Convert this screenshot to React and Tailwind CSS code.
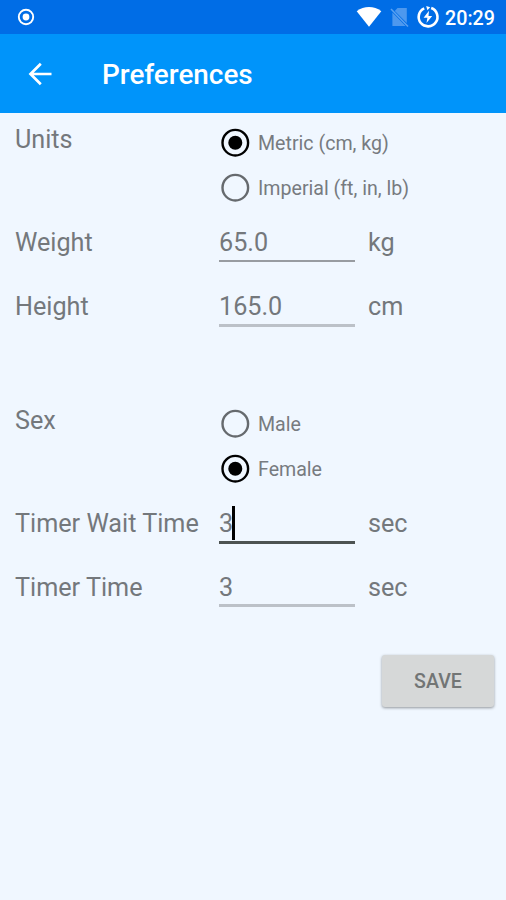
function Radio({ label, checked }) {
  return (
    <div className="flex h-[45px] items-center">
      <svg className="ml-px h-[30px] w-[30px] shrink-0" viewBox="0 0 30 30" fill="none">
        <circle cx="15.3" cy="14.7" r="12.8" stroke={checked ? '#000' : '#666a6e'} strokeWidth="2.4" />
        {checked && <circle cx="15.3" cy="14.7" r="7" fill="#000" />}
      </svg>
      <span className="ml-[8px] mt-[2px] text-[19.6px] leading-6 whitespace-nowrap text-[#777b80]">{label}</span>
    </div>
  );
}

function RadioRow({ label, options }) {
  return (
    <div className="flex">
      <div className="mt-[2px] w-[204px] leading-9">{label}</div>
      <div>
        {options.map((o) => (
          <Radio key={o.label} {...o} />
        ))}
      </div>
    </div>
  );
}

function Field({ label, value, unit, line, focused }) {
  return (
    <div className="flex h-16 pt-[15px]">
      <div className="w-[204px] leading-9 whitespace-nowrap">{label}</div>
      <div className={`w-[136px] ${line}`}>
        <div className="flex h-9 items-center leading-9">
          {value}
          {focused && <span className="-mt-[3px] -ml-px h-[34px] w-[2.5px] bg-black" />}
        </div>
      </div>
      <div className="ml-[13px] leading-9">{unit}</div>
    </div>
  );
}

export default function App() {
  return (
    <div className="h-[900px] w-[506px] overflow-hidden bg-[#f0f7ff] font-['Roboto',sans-serif] text-[25.2px] text-[#74787c]">
      <div className="flex h-[34px] items-center bg-[#006de6] text-white">
        <svg className="ml-[17px] h-[18px] w-[18px]" viewBox="0 0 18 18" fill="none">
          <circle cx="9" cy="9" r="7.2" stroke="#fff" strokeWidth="1.9" />
          <circle cx="9" cy="9" r="3.4" fill="#fff" />
        </svg>
        <svg className="ml-[321px] h-[22px] w-[26px]" viewBox="0 0 26 22">
          <path d="M.7 5.2C8-.4 18-.4 25.3 5.2L13 20.8Z" fill="#fff" />
        </svg>
        <svg className="ml-[8px] h-[22px] w-[20px]" viewBox="0 0 20 22">
          <path d="M7.5 2H16.8V17L4.8 5Z M2.4 6.5 15.6 20H2.4Z" fill="#4d98ee" />
          <path d="M1 3 18 20.5" stroke="#5ba1f0" strokeWidth="1.5" />
        </svg>
        <svg className="ml-[6px] h-[24px] w-[24px]" viewBox="0 0 24 24" fill="none">
          <path d="M15.2 3.1A9.4 9.4 0 1 1 8.2 3.4" stroke="#fff" strokeWidth="2.6" />
          <path d="M10.2 1 14.2 2.2 11.4 5.2Z" fill="#fff" />
          <path d="M13 5.8 7.6 12.8h3.8L10.5 18 16.2 10.9H12.5Z" fill="#fff" />
        </svg>
        <span className="ml-[5px] mt-[3px] text-[19.7px] leading-6 font-medium">20:29</span>
      </div>
      <div className="flex h-[79px] items-center bg-[#0094fa] text-white">
        <svg className="ml-[28px] h-6 w-6" viewBox="0 0 24 24" fill="none" stroke="#fff" strokeWidth="2.7">
          <path d="M23.5 12H2.5M12.8 1.8 2.5 12 12.8 22.2" />
        </svg>
        <h1 className="ml-[50px] mt-[2px] text-[27.9px] leading-9 font-medium">Preferences</h1>
      </div>
      <div className="pt-[7px] pr-[12px] pl-[15px]">
        <RadioRow label="Units" options={[{ label: 'Metric (cm, kg)', checked: true }, { label: 'Imperial (ft, in, lb)' }]} />
        <Field label="Weight" value="65.0" unit="kg" line="h-[37px] border-b-2 border-[#989ca1]" />
        <Field label="Height" value="165.0" unit="cm" line="h-[38px] border-b-3 border-[#bcc1c8]" />
        <div className="mt-[63px]">
          <RadioRow label="Sex" options={[{ label: 'Male' }, { label: 'Female', checked: true }]} />
        </div>
        <Field label="Timer Wait Time" value="3" unit="sec" line="h-[38px] border-b-3 border-[#4d5352]" focused />
        <Field label="Timer Time" value="3" unit="sec" line="h-[37px] border-b-3 border-[#bcc1c8]" />
        <div className="mt-[36px] flex justify-end">
          <button className="h-[52px] w-[112px] rounded-[3px] bg-[#d6d8d8] pt-[2px] text-[19.6px] font-medium text-[#727575] shadow-[0_1px_3px_rgba(0,0,0,0.4)]">
            SAVE
          </button>
        </div>
      </div>
    </div>
  );
}
